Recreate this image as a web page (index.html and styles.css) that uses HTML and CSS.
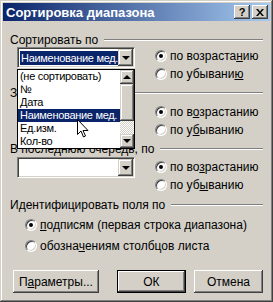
FILE: index.html
```html
<!DOCTYPE html>
<html>
<head>
<meta charset="utf-8">
<title>Сортировка диапазона</title>
<link rel="stylesheet" href="styles.css">
</head>
<body>

<div class="window">

	<div class="titlebar">
		<span class="title">Сортировка диапазона</span>
		<div class="caption-btns">
			<span class="cbtn help">?</span>
			<span class="cbtn">
				<svg width="8" height="7" viewBox="0 0 8 7"><path d="M0 0h2l2 2.5 2-2.5h2l-3 3.5 3 3.5h-2l-2-2.5-2 2.5h-2l3-3.5z" fill="#000"/></svg>
			</span>
		</div>
	</div>

	<div class="content">

		<section class="group g1">
			<div class="group-head"><span>Сортировать по</span><i class="rule"></i></div>
			<div class="group-body">
				<div class="combo">
					<span class="combo-field"><span class="sel">Наименование мед.</span></span>
					<span class="combo-btn"><i class="arrow-down"></i></span>
				</div>
				<div class="radios">
					<div class="opt"><span class="radio on"></span><span>по возраста<u>н</u>ию</span></div>
					<div class="opt"><span class="radio"></span><span>по убывани<u>ю</u></span></div>
				</div>
			</div>
		</section>

		<section class="group g2">
			<div class="group-head"><span>Затем по</span><i class="rule"></i></div>
			<div class="group-body">
				<div class="combo">
					<span class="combo-field"></span>
					<span class="combo-btn"><i class="arrow-down"></i></span>
				</div>
				<div class="radios">
					<div class="opt"><span class="radio on"></span><span>по в<u>о</u>зрастанию</span></div>
					<div class="opt"><span class="radio"></span><span>по у<u>б</u>ыванию</span></div>
				</div>
			</div>
		</section>

		<section class="group g3">
			<div class="group-head"><span>В последнюю очередь, по</span><i class="rule"></i></div>
			<div class="group-body">
				<div class="combo">
					<span class="combo-field"></span>
					<span class="combo-btn"><i class="arrow-down"></i></span>
				</div>
				<div class="radios">
					<div class="opt"><span class="radio on"></span><span>по во<u>з</u>растанию</span></div>
					<div class="opt"><span class="radio"></span><span>по уб<u>ы</u>ванию</span></div>
				</div>
			</div>
		</section>

		<section class="group g4">
			<div class="group-head"><span>Идентифицировать поля по</span><i class="rule"></i></div>
			<div class="ident">
				<div class="opt"><span class="radio on"></span><span><u>п</u>одписям (первая строка диапазона)</span></div>
				<div class="opt"><span class="radio"></span><span>обозна<u>ч</u>ениям столбцов листа</span></div>
			</div>
		</section>

		<div class="buttons">
			<span class="btn wide"><span>П<u>а</u>раметры...</span></span>
			<span class="btn default">ОК</span>
			<span class="btn">Отмена</span>
		</div>

	</div>

	<!-- open drop-down of the first combo -->
	<div class="listbox">
		<ul class="items">
			<li>(не сортировать)</li>
			<li>№</li>
			<li>Дата</li>
			<li class="hl">Наименование мед.</li>
			<li>Ед.изм.</li>
			<li>Кол-во</li>
		</ul>
		<div class="scrollbar">
			<span class="sb-btn"><i class="arrow-up"></i></span>
			<span class="sb-thumb"></span>
			<span class="sb-track"></span>
			<span class="sb-btn"><i class="arrow-down"></i></span>
		</div>
	</div>

	<svg class="cursor" width="12" height="19" viewBox="0 0 12 19">
		<path d="M0.5 0.5v15l3.5-3.5 2.5 6 2-1-2.5-5.5h5z" fill="#fff" stroke="#000" stroke-width="1"/>
	</svg>

</div>

</body>
</html>
```

FILE: styles.css
```css
body {
	margin : 0;
	font-family : "Liberation Sans", Arial, sans-serif;
	font-size : 12px;
	color : #000;
}

.window {
	position : relative;
	width : 273px;
	height : 302px;
	box-sizing : border-box;
	padding : 3px;
	background : #d4d0c8;
	box-shadow : inset -1px -1px #404040, inset 1px 1px #d4d0c8, inset -2px -2px #808080, inset 2px 2px #fff;
}

/* title bar */

.titlebar {
	height : 18px;
	display : flex;
	align-items : center;
	justify-content : space-between;
	padding : 0 2px 0 3px;
	background : linear-gradient(to right, #0a246a, #a6caf0);
	color : #fff;
	font-weight : bold;
	font-size : 13px;
}

.caption-btns {
	display : flex;
	gap : 2px;
}

.cbtn {
	width : 16px;
	height : 14px;
	display : flex;
	align-items : center;
	justify-content : center;
	background : #d4d0c8;
	color : #000;
	font-size : 11px;
	box-shadow : inset -1px -1px #404040, inset 1px 1px #fff, inset -2px -2px #808080;
}

/* groups */

.content {
	padding : 0 7px;
}

.group-head {
	height : 14px;
	line-height : 14px;
	display : flex;
	align-items : center;
	white-space : nowrap;
}

.rule {
	flex : 1;
	margin-left : 6px;
	border-top : 1px solid #808080;
	border-bottom : 1px solid #fff;
}

.group-body {
	display : flex;
	align-items : flex-start;
}

.g1 { margin-top : 12px; }
.g2 { margin-top : 3px; }
.g3 { margin-top : 3px; }
.g4 { margin-top : 4px; }

.g2 .radios { padding-top : 3px; }
.g3 .radios { padding-top : 2px; }
.g3 .combo { margin-top : 1px; }

.radios {
	margin-left : 20px;
}

.opt {
	height : 18px;
	display : flex;
	align-items : center;
	gap : 3px;
	white-space : nowrap;
}

.ident {
	padding : 2px 0 0 15px;
}

.ident .opt {
	height : 21px;
}

.radio {
	position : relative;
	flex : none;
	width : 12px;
	height : 12px;
	box-sizing : border-box;
	border-radius : 50%;
	background : #fff;
	border : 1px solid;
	border-color : #808080 #fff #fff #808080;
	box-shadow : inset 1px 1px #404040, inset -1px -1px #d4d0c8;
}

.radio.on::after {
	content : "";
	position : absolute;
	left : 3px;
	top : 3px;
	width : 4px;
	height : 4px;
	border-radius : 50%;
	background : #000;
}

/* combo boxes */

.combo {
	width : 118px;
	height : 21px;
	box-sizing : border-box;
	margin-left : 7px;
	padding : 1px;
	display : flex;
	background : #fff;
	border : 1px solid;
	border-color : #808080 #fff #fff #808080;
	box-shadow : inset 1px 1px #404040, inset -1px -1px #d4d0c8;
}

.combo-field {
	flex : 1;
	display : flex;
	align-items : center;
	padding-left : 1px;
	overflow : hidden;
}

.sel {
	padding : 0 1px;
	line-height : 14px;
	font-size : 11px;
	letter-spacing : -0.3px;
	background : #0a246a;
	color : #fff;
	white-space : nowrap;
}

.combo-btn,
.sb-btn {
	flex : none;
	width : 15px;
	display : flex;
	align-items : center;
	justify-content : center;
	background : #d4d0c8;
	box-shadow : inset -1px -1px #404040, inset 1px 1px #d4d0c8, inset -2px -2px #808080, inset 2px 2px #fff;
}

.arrow-down,
.arrow-up {
	width : 0;
	height : 0;
	border-left : 4px solid transparent;
	border-right : 4px solid transparent;
}

.arrow-down { border-top : 4px solid #000; }
.arrow-up { border-bottom : 4px solid #000; }

/* drop-down list */

.listbox {
	position : absolute;
	left : 17px;
	top : 69px;
	width : 118px;
	height : 80px;
	box-sizing : border-box;
	display : flex;
	background : #fff;
	border : 1px solid #000;
	font-size : 11px;
	letter-spacing : -0.3px;
}

.items {
	flex : 1;
	margin : 0;
	padding : 0;
	list-style : none;
	overflow : hidden;
}

.items li {
	height : 13px;
	line-height : 13px;
	padding-left : 2px;
	white-space : nowrap;
}

.items li.hl {
	background : #0a246a;
	color : #fff;
}

.scrollbar {
	width : 14px;
	display : flex;
	flex-direction : column;
}

.scrollbar .sb-btn {
	width : 14px;
	height : 14px;
}

.sb-thumb {
	height : 37px;
	background : #d4d0c8;
	box-shadow : inset -1px -1px #404040, inset 1px 1px #d4d0c8, inset -2px -2px #808080, inset 2px 2px #fff;
}

.sb-track {
	flex : 1;
	background : conic-gradient(#fff 25%, #d4d0c8 0 50%, #fff 0 75%, #d4d0c8 0);
	background-size : 2px 2px;
}

.cursor {
	position : absolute;
	left : 77px;
	top : 119px;
}

/* buttons */

.buttons {
	margin-top : 14px;
	padding-left : 3px;
	display : flex;
}

.btn {
	width : 70px;
	height : 23px;
	box-sizing : border-box;
	display : flex;
	align-items : center;
	justify-content : center;
	background : #d4d0c8;
	box-shadow : inset -1px -1px #404040, inset 1px 1px #fff, inset -2px -2px #808080, inset 2px 2px #d4d0c8;
}

.btn.wide {
	width : 87px;
	margin-right : 18px;
}

.btn.default {
	margin-right : 8px;
	border : 1px solid #000;
}
```
